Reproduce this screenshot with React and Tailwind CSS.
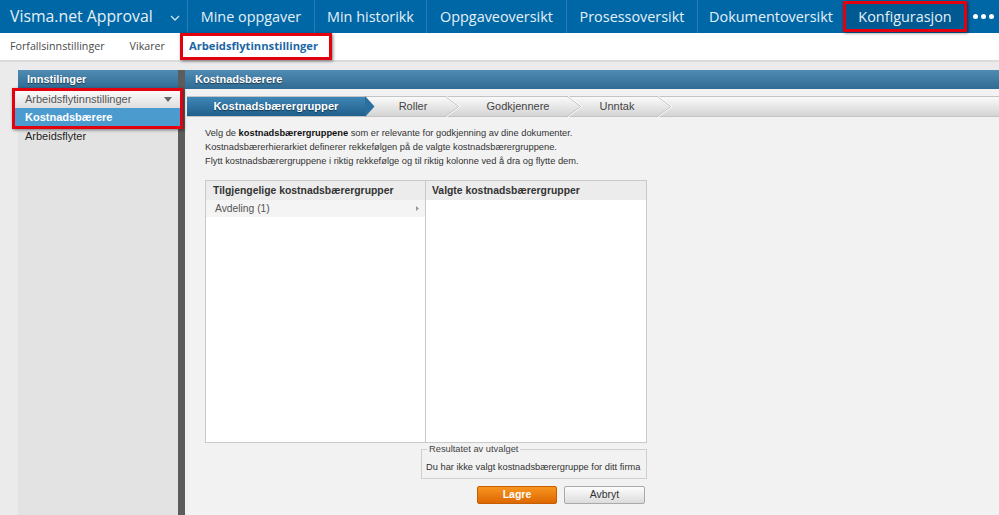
import React from 'react';

const navItems = [
    { label: 'Mine oppgaver', w: 'w-[127px]' },
    { label: 'Min historikk', w: 'w-[112px]' },
    { label: 'Oppgaveoversikt', w: 'w-[140px]' },
    { label: 'Prosessoversikt', w: 'w-[131px]' },
    { label: 'Dokumentoversikt', w: 'w-[147px]' },
];

function Chevron() {
    return (
        <svg width="10" height="6" viewBox="0 0 10 6" fill="none">
            <path d="M1 1l4 4 4-4" stroke="#cfe3f1" strokeWidth="1.3" />
        </svg>
    );
}

function StepSep({ className }) {
    return (
        <svg className={className} width="16" height="21" viewBox="0 0 16 21" fill="none">
            <path d="M0 0 L14 10.5 L0 21" stroke="#b5b5b5" strokeWidth="1" />
            <path d="M1 0 L15 10.5 L1 21" stroke="#ffffff" strokeWidth="1" />
        </svg>
    );
}

export default function App() {
    return (
        <div className="w-[999px] h-[515px] overflow-hidden bg-[#ebebeb] flex flex-col whitespace-nowrap" style={{ fontFamily: '"Liberation Sans", Arial, sans-serif' }}>
            {/* Top bar */}
            <div className="h-[33px] bg-[#0067a6] flex items-stretch shrink-0 text-[#e6f0f7]" style={{ fontFamily: '"Open Sans", sans-serif' }}>
                <div className="w-[188px] flex items-center pl-[10px] border-r border-[#2a7db3]">
                    <span className="text-[15.8px]">Visma.net Approval</span>
                    <span className="ml-[17px] mt-[2px]"><Chevron /></span>
                </div>
                {navItems.map((n) => (
                    <div key={n.label} className={`${n.w} flex items-center justify-center border-r border-[#2a7db3] text-[14.4px]`}>
                        {n.label}
                    </div>
                ))}
                <div className="w-[124px] -ml-[2px] my-[1px] flex items-center justify-center bg-[#005a91] border-[3px] border-[#e3000f] shadow-[1px_1px_3px_rgba(0,0,0,0.5)] text-[14.4px] relative z-10">
                    Konfigurasjon
                </div>
                <div className="flex-1 flex items-center justify-center gap-[3px]">
                    <span className="w-[5px] h-[5px] rounded-full bg-white" />
                    <span className="w-[5px] h-[5px] rounded-full bg-white" />
                    <span className="w-[5px] h-[5px] rounded-full bg-white" />
                </div>
            </div>

            {/* Sub nav */}
            <div className="h-[29px] bg-white flex items-center shrink-0 border-b-2 border-[#dcdcdc] text-[10.7px] text-[#4a4a4a]" style={{ fontFamily: '"Open Sans", sans-serif' }}>
                <span className="ml-[10px]">Forfallsinnstillinger</span>
                <span className="ml-[25px]">Vikarer</span>
                <span className="ml-[15px] h-[27px] w-[152px] pl-[6px] flex items-center border-[3px] border-[#e3000f] shadow-[1px_1px_3px_rgba(0,0,0,0.5)] font-bold text-[11.2px] text-[#1b66a6]">
                    Arbeidsflytinnstillinger
                </span>
            </div>

            {/* Main */}
            <div className="flex-1 flex pt-[8px] min-h-0">
                {/* Left panel */}
                <div className="ml-[18px] w-[160px] bg-[#e3e3e3] flex flex-col">
                    <div className="h-[19px] bg-gradient-to-b from-[#4f8bb3] to-[#2f6b93] flex items-center pl-[9px] text-white font-bold text-[11px] [text-shadow:0_1px_1px_rgba(0,0,0,0.5)]">
                        Innstilinger
                    </div>
                    <div className="relative -ml-[6px] -mr-[5px] -mt-[1px] border-[3px] border-[#e3000f] shadow-[1px_1px_3px_rgba(0,0,0,0.5)]">
                        <div className="h-[17px] bg-gradient-to-b from-[#fbfbfb] to-[#dedede] flex items-center justify-between pl-[10px] pr-[8px] text-[11px] text-[#555]">
                            <span>Arbeidsflytinnstillinger</span>
                            <svg width="8" height="5" viewBox="0 0 8 5"><path d="M0 0h8L4 5z" fill="#666" /></svg>
                        </div>
                        <div className="h-[18px] bg-[#4c9bcf] flex items-center pl-[10px] text-white font-bold text-[11px]">
                            Kostnadsbærere
                        </div>
                    </div>
                    <div className="pl-[7px] leading-[12px] mt-[1px] text-[11px] text-[#222]">Arbeidsflyter</div>
                </div>

                {/* Divider */}
                <div className="w-[7px] bg-[#5c5c5c]" />

                {/* Right panel */}
                <div className="flex-1 bg-[#f2f2f2] flex flex-col">
                    <div className="h-[19px] bg-gradient-to-b from-[#4f8bb3] to-[#2f6b93] flex items-center pl-[10px] text-white font-bold text-[11px] [text-shadow:0_1px_1px_rgba(0,0,0,0.5)]">
                        Kostnadsbærere
                    </div>

                    {/* Steps */}
                    <div className="mt-[7px] ml-[2px] h-[21px] flex items-stretch bg-gradient-to-b from-[#fafafa] to-[#d4d4d4] border-y border-[#c4c4c4] text-[11px] text-[#444]">
                        <div className="relative w-[178px] flex items-center justify-center bg-gradient-to-b from-[#3f87b7] to-[#1f5f8c] text-white font-bold text-[11.2px] [text-shadow:0_1px_1px_rgba(0,0,0,0.5)]">
                            Kostnadsbærergrupper
                            <svg className="absolute -right-[10px] top-[-1px]" width="10" height="21" viewBox="0 0 10 21"><path d="M0 0 L9.5 10.5 L0 21z" fill="#2b6f9e" /></svg>
                        </div>
                        <div className="relative w-[88px] flex items-center justify-center pl-[8px]">
                            Roller
                            <StepSep className="absolute -right-[8px] top-[-1px]" />
                        </div>
                        <div className="relative w-[122px] flex items-center justify-center pl-[8px]">
                            Godkjennere
                            <StepSep className="absolute -right-[8px] top-[-1px]" />
                        </div>
                        <div className="relative w-[90px] flex items-center justify-center pr-[6px]">
                            Unntak
                            <StepSep className="absolute -right-[8px] top-[-1px]" />
                        </div>
                    </div>

                    {/* Body */}
                    <div className="pl-[20px] pt-[9px] w-[462px] flex flex-col">
                        <div className="text-[9.3px] leading-[14px] text-[#333]">
                            <p>Velg de <b className="text-[#111]">kostnadsbærergruppene</b> som er relevante for godkjenning av dine dokumenter.</p>
                            <p>Kostnadsbærerhierarkiet definerer rekkefølgen på de valgte kostnadsbærergruppene.</p>
                            <p>Flytt kostnadsbærergruppene i riktig rekkefølge og til riktig kolonne ved å dra og flytte dem.</p>
                        </div>

                        <div className="mt-[12px] h-[263px] border border-[#c9c9c9] bg-white flex">
                            <div className="w-[220px] border-r border-[#c9c9c9] flex flex-col">
                                <div className="h-[19px] bg-[#ececec] flex items-center pl-[7px] font-bold text-[10.4px] text-[#333]">
                                    Tilgjengelige kostnadsbærergrupper
                                </div>
                                <div className="h-[17px] bg-[#f4f4f4] flex items-center justify-between pl-[9px] pr-[6px] text-[10.3px] text-[#555]">
                                    <span>Avdeling (1)</span>
                                    <svg width="3" height="5" viewBox="0 0 3 5"><path d="M0 0L3 2.5 0 5z" fill="#999" /></svg>
                                </div>
                            </div>
                            <div className="flex-1 flex flex-col">
                                <div className="h-[19px] bg-[#ececec] flex items-center pl-[6px] font-bold text-[10.4px] text-[#333]">
                                    Valgte kostnadsbærergrupper
                                </div>
                            </div>
                        </div>

                        <div className="self-end mt-[6px] w-[226px] h-[30px] border border-[#cfcfcf] relative pt-[11px] pl-[4px] text-[9.3px] text-[#333]">
                            <span className="absolute -top-[7px] left-[5px] bg-[#f2f2f2] px-[2px] text-[#444]">Resultatet av utvalget</span>
                            Du har ikke valgt kostnadsbærergruppe for ditt firma
                        </div>

                        <div className="self-end mt-[7px] mr-[2px] flex gap-[7px]">
                            <button className="w-[80px] h-[18px] rounded-[2px] bg-gradient-to-b from-[#f8941e] to-[#dd6800] border border-[#c65e00] text-white font-bold text-[10.5px]">
                                Lagre
                            </button>
                            <button className="w-[81px] h-[18px] rounded-[2px] bg-gradient-to-b from-[#fdfdfd] to-[#dcdcdc] border border-[#a9a9a9] text-[#333] text-[10.5px]">
                                Avbryt
                            </button>
                        </div>
                    </div>
                </div>
            </div>
        </div>
    );
}
